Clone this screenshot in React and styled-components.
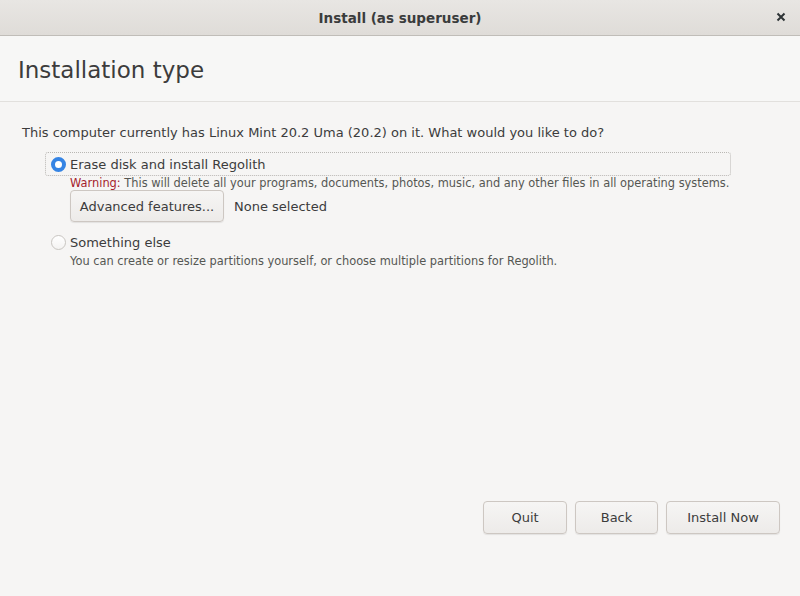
import React, { useState } from 'react';
import styled, { createGlobalStyle } from 'styled-components';

const GlobalStyle = createGlobalStyle`
  html, body {
    margin: 0;
    padding: 0;
    background: #f6f5f4;
    font-family: "DejaVu Sans", "Liberation Sans", sans-serif;
    color: #2e3436;
  }
`;

const Window = styled.div`
  width: 800px;
  height: 596px;
  display: flex;
  flex-direction: column;
  background: #f6f5f4;
`;

const TitleBar = styled.div`
  height: 35px;
  flex-shrink: 0;
  display: flex;
  align-items: center;
  justify-content: center;
  position: relative;
  background: linear-gradient(#e8e6e3, #dfdcd8);
  border-bottom: 1px solid #c0bdb8;
  font-size: 13.5px;
  font-weight: bold;
  color: #3a3c3c;
`;

const CloseButton = styled.button`
  position: absolute;
  right: 10px;
  top: 8px;
  width: 18px;
  height: 18px;
  border: none;
  background: transparent;
  padding: 0;
  display: flex;
  align-items: center;
  justify-content: center;
  cursor: pointer;
`;

const Header = styled.div`
  height: 66px;
  flex-shrink: 0;
  display: flex;
  align-items: center;
  padding: 2px 18px 0;
  box-sizing: border-box;
  background: #f7f7f6;
  border-bottom: 1px solid #e2e0dd;
  font-size: 23px;
  color: #3c3c3c;
`;

const Body = styled.div`
  flex: 1;
  display: flex;
  flex-direction: column;
  padding: 23px 20px 0 22px;
`;

const Question = styled.div`
  font-size: 13px;
  color: #3c3c3c;
  margin-bottom: 12px;
`;

const Options = styled.div`
  padding-left: 23px;
  display: flex;
  flex-direction: column;
`;

const OptionRow = styled.label`
  display: flex;
  align-items: center;
  gap: 4px;
  width: 686px;
  height: 24px;
  box-sizing: border-box;
  padding-left: 5px;
  border: 1px dotted ${(p) => (p.$focused ? '#b9b7b3' : 'transparent')};
  border-radius: 3px;
  font-size: 13px;
  color: #3c3c3c;
  cursor: pointer;
`;

const Radio = styled.span`
  width: 15px;
  height: 15px;
  box-sizing: border-box;
  border-radius: 50%;
  flex-shrink: 0;
  border: ${(p) => (p.$checked ? '4px solid #3584e4' : '1px solid #c8c5c1')};
  background: ${(p) => (p.$checked ? '#ffffff' : 'linear-gradient(#ffffff, #f4f3f2)')};
`;

const Description = styled.div`
  padding-left: 25px;
  font-size: 11.4px;
  line-height: 13px;
  color: #555753;
  margin-top: 1px;
`;

const WarnLabel = styled.span`
  color: #a51d2d;
`;

const FeatureRow = styled.div`
  display: flex;
  align-items: center;
  gap: 10px;
  padding-left: 25px;
  margin-top: 0;
  margin-bottom: 8px;
`;

const Button = styled.button`
  height: ${(p) => p.$height || 33}px;
  width: ${(p) => p.$width}px;
  box-sizing: border-box;
  border: 1px solid #cdc7c2;
  border-radius: 4px;
  background: linear-gradient(#f6f5f4, #edebe9);
  box-shadow: 0 1px 1px rgba(0, 0, 0, 0.08);
  font-family: inherit;
  font-size: 13px;
  color: #3c3c3c;
  padding: 0;
  cursor: pointer;
`;

const Muted = styled.span`
  font-size: 13px;
  color: #3c3c3c;
`;

const Footer = styled.div`
  margin-top: auto;
  display: flex;
  justify-content: flex-end;
  gap: 8px;
  padding: 0 0 62px 0;
`;

function Option({ checked, focused, label, onSelect, children }) {
  return (
    <>
      <OptionRow $focused={focused} onClick={onSelect}>
        <Radio $checked={checked} />
        {label}
      </OptionRow>
      {children}
    </>
  );
}

export default function App() {
  const [choice, setChoice] = useState('erase');

  return (
    <>
      <GlobalStyle />
      <Window>
        <TitleBar>
          Install (as superuser)
          <CloseButton aria-label="Close">
            <svg width="10" height="10" viewBox="0 0 10 10">
              <path d="M1.5 1.5 L8.5 8.5 M8.5 1.5 L1.5 8.5" stroke="#2e3436" strokeWidth="2" />
            </svg>
          </CloseButton>
        </TitleBar>
        <Header>Installation type</Header>
        <Body>
          <Question>
            This computer currently has Linux Mint 20.2 Uma (20.2) on it. What would you like to do?
          </Question>
          <Options>
            <Option
              checked={choice === 'erase'}
              focused
              label="Erase disk and install Regolith"
              onSelect={() => setChoice('erase')}
            >
              <Description>
                <WarnLabel>Warning:</WarnLabel> This will delete all your programs, documents, photos, music, and any other files in all operating systems.
              </Description>
              <FeatureRow>
                <Button $width={154} $height={32}>Advanced features...</Button>
                <Muted>None selected</Muted>
              </FeatureRow>
            </Option>
            <Option
              checked={choice === 'other'}
              label="Something else"
              onSelect={() => setChoice('other')}
            >
              <Description>
                You can create or resize partitions yourself, or choose multiple partitions for Regolith.
              </Description>
            </Option>
          </Options>
          <Footer>
            <Button $width={84}>Quit</Button>
            <Button $width={83}>Back</Button>
            <Button $width={114}>Install Now</Button>
          </Footer>
        </Body>
      </Window>
    </>
  );
}
